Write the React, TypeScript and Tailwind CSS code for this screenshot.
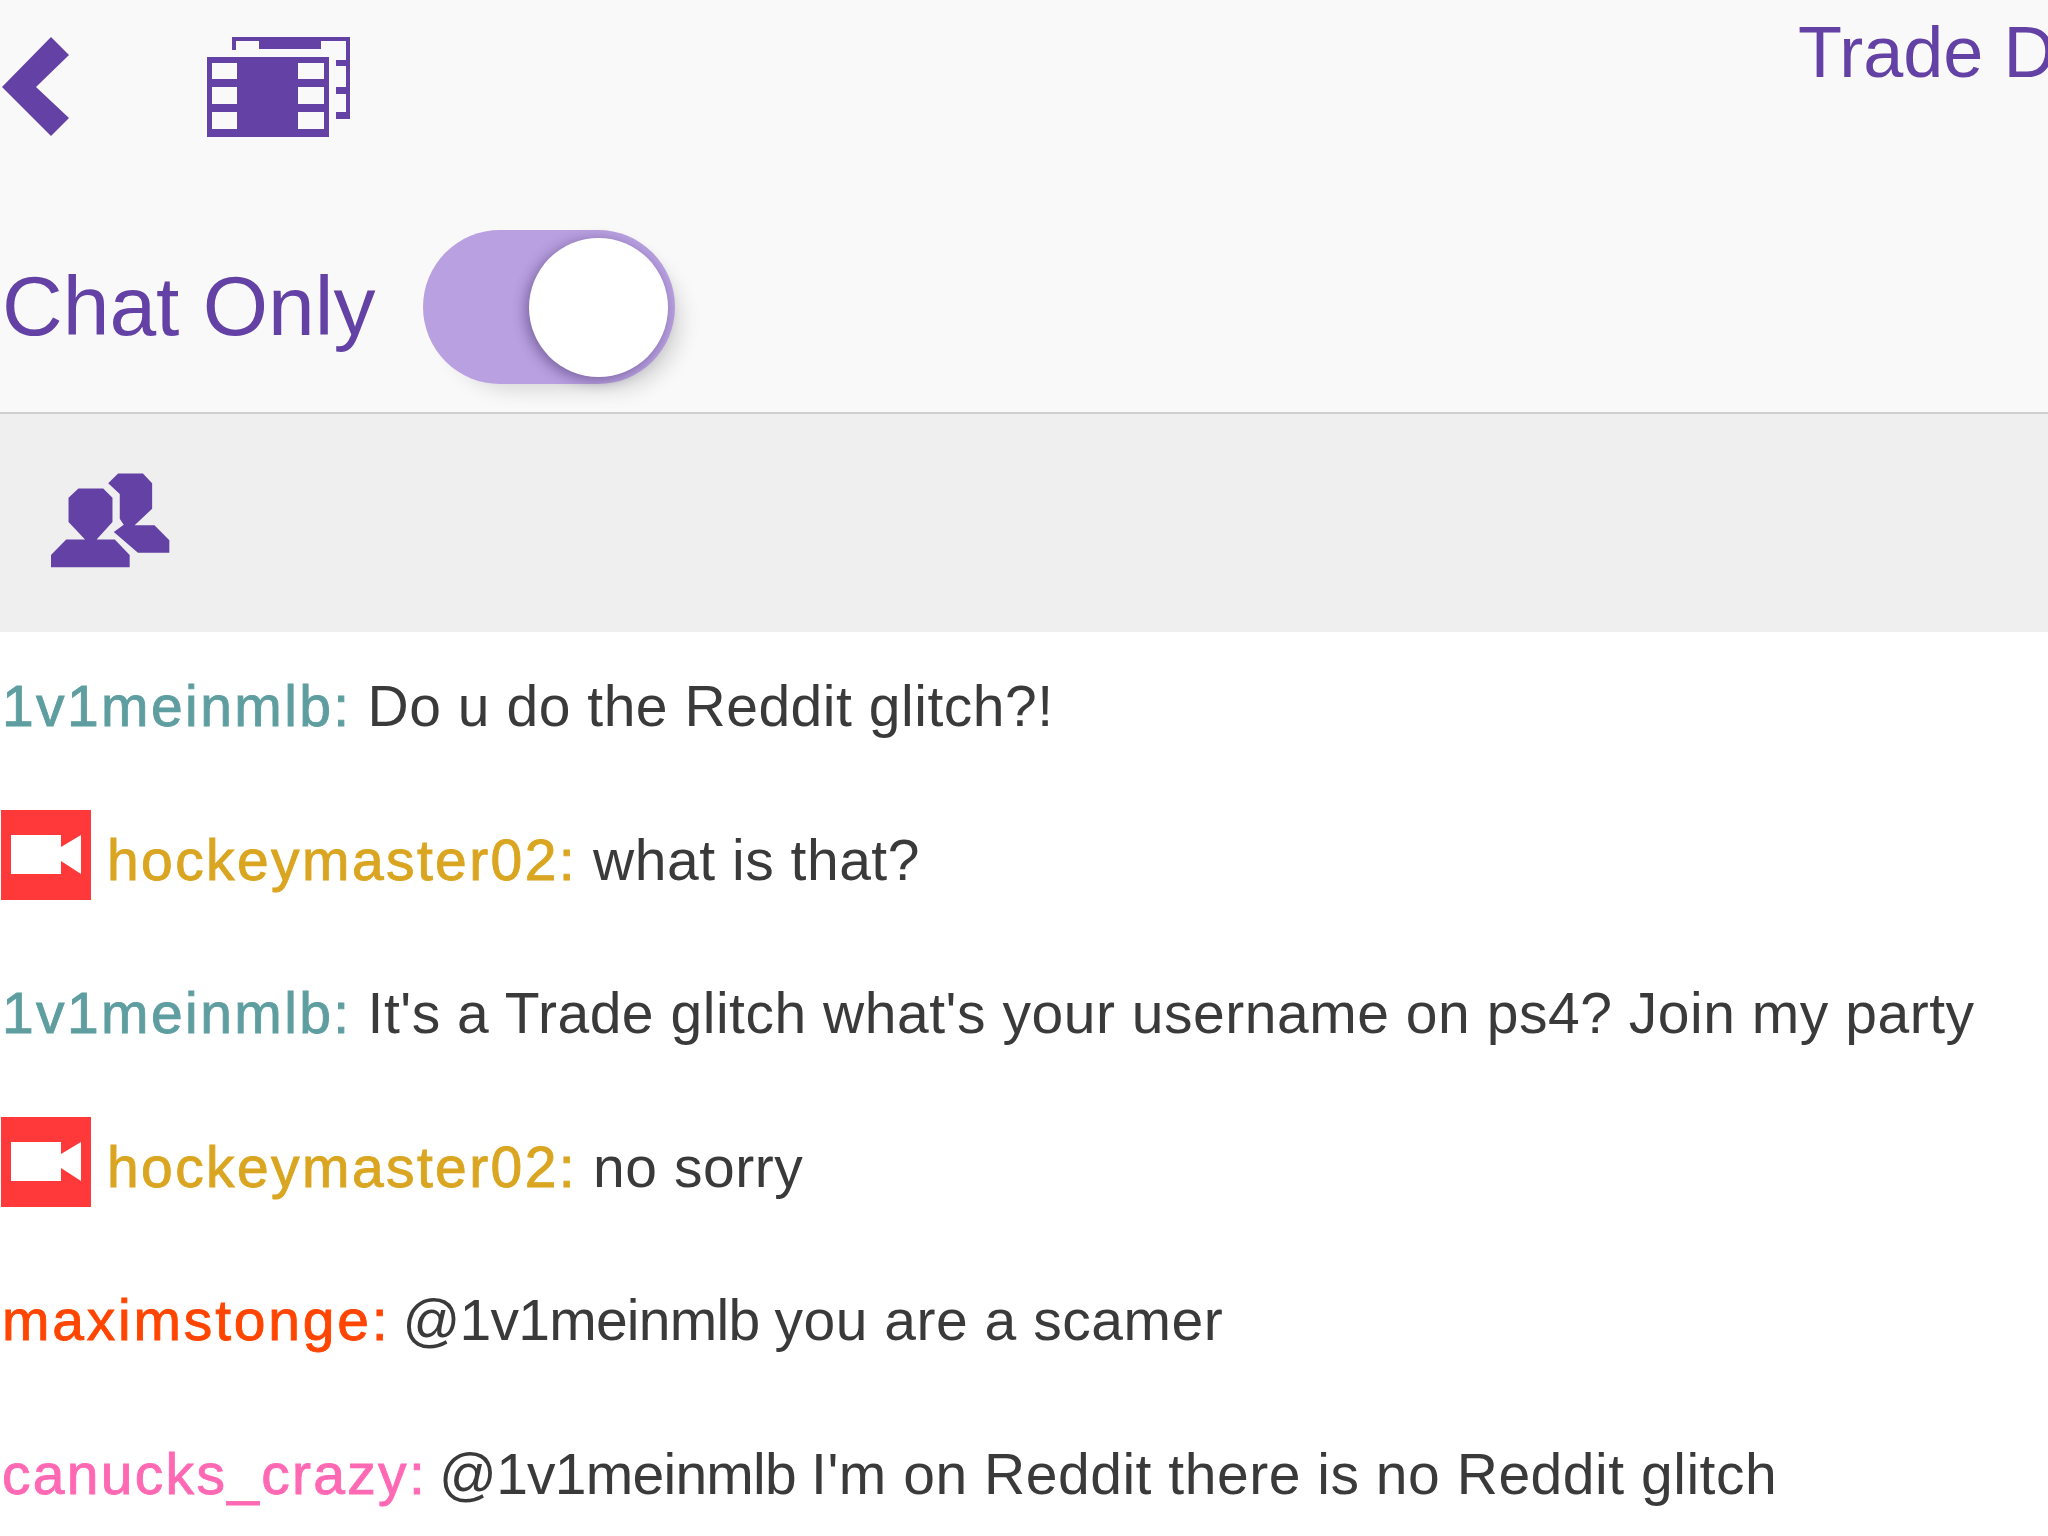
import React from 'react';

const font = { fontFamily: '"Liberation Sans", Arial, sans-serif' };

const FilmIcon = () => (
  <svg width="143" height="100" viewBox="0 0 143 100" fill="#6441a5" fillRule="evenodd" className="shrink-0">
    <path d="M0 20H122V100H0ZM5 26V42H30V26ZM5 50V67H30V50ZM5 75V92H30V75ZM91 26V42H117V26ZM91 50V67H117V50ZM91 75V92H117V75Z" />
    <path d="M25 0H143V82H129V75H139V57H129V50H139V29H129V23H139V4H114V12H52V4H29V13H25Z" />
  </svg>
);

const PeopleIcon = () => (
  <svg width="119" height="95" viewBox="152 98 360 285" fill="#6441a5">
    <path d="M235 144H310L338 172V245L290 298H345L390 345V382H152V345L198 298H255L205 245V172Z" />
    <path d="M355 98H430L458 128V205L405 255H465L510 300V338H415L342 275L372 253L360 235V160L325 128Z" />
  </svg>
);

const CameraBadge = () => (
  <svg width="90" height="90" viewBox="0 0 90 90" className="shrink-0 ml-px mr-[14px] -mt-[10px]">
    <rect width="90" height="90" fill="#ff3939" />
    <path d="M10 25H60V37L80 25V64L60 51V64H10Z" fill="#fff" />
  </svg>
);

const messages = [
  { name: '1v1meinmlb', color: 'text-[#5f9ea0] tracking-[2.4px]', text: 'Do u do the Reddit glitch?!' },
  { name: 'hockeymaster02', color: 'text-[#daa520] tracking-[2.4px]', text: 'what is that?', badge: true },
  { name: '1v1meinmlb', color: 'text-[#5f9ea0] tracking-[2.4px]', text: "It's a Trade glitch what's your username on ps4? Join my party" },
  { name: 'hockeymaster02', color: 'text-[#daa520] tracking-[2.4px]', text: 'no sorry', badge: true },
  { name: 'maximstonge', color: 'text-[#ff4500] tracking-[2.8px]', mention: '@1v1meinmlb', text: 'you are a scamer' },
  { name: 'canucks_crazy', color: 'text-[#ff69b4] tracking-[2.3px]', mention: '@1v1meinmlb', text: "I'm on Reddit there is no Reddit glitch" },
];

const App = () => {
  return (
    <div style={font} className="w-[2048px] h-[1536px] overflow-hidden bg-white blur-[0.6px]">
      <header className="h-[414px] bg-[#f9f9f9] border-b-2 border-[#cfcfcf]">
        <div className="flex items-start h-[230px] pt-[37px] pl-[2px]">
          <svg width="67" height="99" viewBox="0 0 67 99" fill="#6441a5" className="shrink-0">
            <path d="M49 0L67 18L34 50L67 81L49 99L0 50Z" />
          </svg>
          <div className="ml-[138px]">
            <FilmIcon />
          </div>
          <span className="ml-[1448px] -mt-[35px] text-[72px] leading-[100px] text-[#6441a5] whitespace-nowrap">Trade D</span>
        </div>
        <div className="flex items-center h-[154px] pl-[2px]">
          <span className="mb-[3px] text-[84px] leading-[100px] text-[#6441a5]">Chat Only</span>
          <button className="ml-[47px] w-[252px] h-[154px] rounded-full bg-[#b9a0e0] flex items-center justify-end pr-[7px] shadow-[14px_14px_20px_-8px_rgba(0,0,0,0.14)]">
            <span className="block w-[139px] h-[139px] rounded-full bg-white shadow-[-3px_3px_14px_rgba(40,20,80,0.45)]" />
          </button>
        </div>
      </header>

      <div className="h-[218px] bg-[#efefef] pl-[51px] pt-[59px]">
        <PeopleIcon />
      </div>

      <ul className="flex flex-col gap-[77.5px] pt-[36px] text-[57px] leading-[76px] whitespace-nowrap">
        {messages.map((m, i) => (
          <li key={i} className="flex items-center h-[76px]">
            {m.badge && <CameraBadge />}
            <span className={`${m.color} pl-[2px] [-webkit-text-stroke:0.9px]`}>{m.name}:</span>
            <span className={`${m.mention ? 'ml-[12px]' : 'ml-[16px]'} text-[#3a3a3a] tracking-[0.53px]`}>
              {m.mention && <span className="tracking-[-0.75px]">{m.mention} </span>}
              {m.text}
            </span>
          </li>
        ))}
      </ul>
    </div>
  );
};

export default App;
